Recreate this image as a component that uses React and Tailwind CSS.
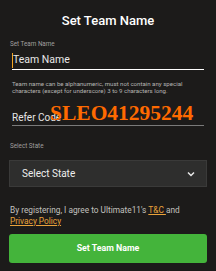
export default function App() {
  return (
    <div className="relative w-[216px] h-[271px] overflow-hidden bg-[#1c1b1a] font-['Roboto',sans-serif]">
      <div className="flex flex-col">
        <div className="h-[40px] pt-[13px] text-center text-[13px] font-medium text-white leading-[16px]">Set Team Name</div>
        <div className="px-[10px] text-[6.3px] leading-[8px] text-[#a09f9e]">Set Team Name</div>
        <div className="mx-[12px] mt-[3px] flex h-[19px] items-center border-b-[1.5px] border-white">
          <span className="h-[15px] w-[1px] bg-[#f5a623]"></span>
          <span className="text-[10.5px] leading-[14px] text-[#e8e8e8]">Team Name</span>
        </div>
        <div className="mx-[12px] mt-[10px] text-[6.1px] leading-[7px] text-[#b5b4b2]">
          Team name can be alphanumeric, must not contain any special
          <br />
          characters (except for underscore) 3 to 9 characters long.
        </div>
        <div className="mx-[12px] mt-[17px] flex h-[15px] items-end border-b-[1.5px] border-[#7a7a7a] pb-[1px] text-[10px] leading-[13px] text-[#e6e6e6]">Refer Code</div>
        <div className="mt-[16px] px-[10px] text-[6.3px] leading-[8px] text-[#a09f9e]">Select State</div>
        <div className="mx-[9px] mt-[10px] flex h-[27px] items-center justify-between border border-[#3a3a39] bg-[#2e2e2d] pl-[12px] pr-[11px]">
          <span className="text-[10px] text-[#eeeeee]">Select State</span>
          <svg width="8" height="6" viewBox="0 0 8 6" fill="none">
            <path d="M1 1.5 L4 4.5 L7 1.5" stroke="#e8e8e8" strokeWidth="1.5" />
          </svg>
        </div>
        <div className="mx-[10px] mt-[18px] text-[8.3px] leading-[10.5px] text-[#c2c1bf]">
          By registering, I agree to Ultimate11's{" "}
          <span className="text-[#e9a23b] underline">T&amp;C </span>and
          <br />
          <span className="text-[#e9a23b] underline">Privacy Policy</span>
        </div>
        <div className="mx-[9px] mt-[8px] flex h-[29px] items-center justify-center rounded-[3px] bg-[#44b43b] text-[8.8px] font-bold text-white">Set Team Name</div>
      </div>
      <div className="absolute left-[50px] top-[100px] font-['Liberation_Serif',serif] text-[21.5px] font-bold leading-[26px] text-[#ff6a00]">SLEO41295244</div>
    </div>
  );
}
